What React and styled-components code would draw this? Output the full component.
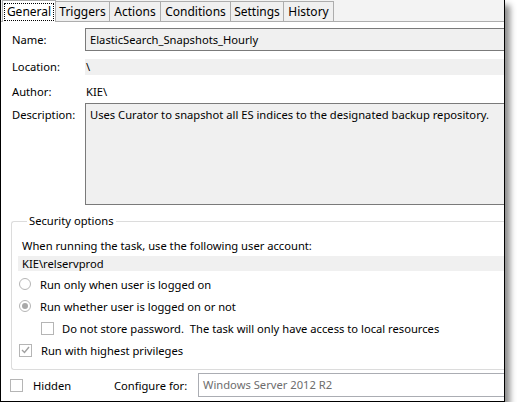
import React from "react";
import styled, { createGlobalStyle } from "styled-components";

const GlobalStyle = createGlobalStyle`
  html, body {
    margin: 0;
    background: #fff;
  }
  body {
    font-family: "Noto Sans", "Liberation Sans", sans-serif;
    font-size: 11.2px;
    color: #000;
  }
`;

const Window = styled.div`
  position: relative;
  width: 503px;
  height: 401px;
  border: 1px solid #000;
  border-top: none;
  background: #fff;
  overflow: hidden;
  box-shadow: 5px 5px 6px rgba(0, 0, 0, 0.45);
`;

const TabBar = styled.div`
  display: flex;
  align-items: flex-end;
  height: 22px;
  padding-left: 1px;
  background: #f3f3f3;
  border-bottom: 1px solid #adadad;
  box-sizing: border-box;
`;

const Tab = styled.div`
  width: ${(p) => p.$w}px;
  height: ${(p) => (p.$active ? 22 : 20)}px;
  box-sizing: border-box;
  display: flex;
  align-items: center;
  justify-content: center;
  background: ${(p) => (p.$active ? "#fff" : "#f0f0f0")};
  border: 1px solid #adadad;
  border-bottom: none;
  margin-bottom: ${(p) => (p.$active ? -1 : 0)}px;
  margin-right: -1px;
  font-size: 12px;
  line-height: 1;
`;

const FocusRing = styled.span`
  padding: 3px 3px;
  outline: 1px dotted #000;
  outline-offset: -1px;
`;

const Body = styled.div`
  padding: 6px 0 0 11px;
`;

const Form = styled.div`
  display: grid;
  grid-template-columns: 73px 1fr;
  align-items: center;
  margin-right: -20px;
`;

const Label = styled.div`
  align-self: ${(p) => (p.$top ? "start" : "center")};
  padding-top: ${(p) => (p.$top ? 4 : 0)}px;
  line-height: 16px;
  margin-bottom: ${(p) => p.$gap || 0}px;
`;

const Field = styled.div`
  box-sizing: border-box;
  height: ${(p) => p.$h}px;
  margin-bottom: ${(p) => p.$gap || 0}px;
  padding: ${(p) => (p.$boxed ? "3px 4px" : "0 1px")};
  line-height: 16px;
  background: ${(p) => (p.$fill ? "#f0f0f0" : "#fff")};
  border: ${(p) => (p.$boxed ? "1px solid #7a7a7a" : "none")};
  white-space: nowrap;
`;

const Group = styled.fieldset`
  margin: 9px 0 0 -1px;
  padding: 10px 0 8px 10px;
  border: 1px solid #dcdcdc;
  border-right: none;
  border-radius: 3px 0 0 3px;
  min-width: 0;
`;

const Legend = styled.legend`
  padding: 0 2px;
  margin-left: 5px;
  line-height: 14px;
`;

const Line = styled.div`
  line-height: 16px;
  white-space: nowrap;
`;

const Account = styled.div`
  margin: 2px 0 2px -4px;
  padding-left: 4px;
  height: 15px;
  line-height: 15px;
  background: #f0f0f0;
`;

const Option = styled.label`
  display: flex;
  align-items: center;
  gap: ${(p) => p.$gap || 9}px;
  height: 22px;
  margin-left: ${(p) => p.$indent || -3}px;
  white-space: nowrap;
`;

const Radio = styled.span`
  position: relative;
  width: 12px;
  height: 12px;
  box-sizing: border-box;
  border: 1px solid #b5b5b5;
  border-radius: 50%;
  background: #fff;
  flex: none;

  &::after {
    content: "";
    display: ${(p) => (p.$on ? "block" : "none")};
    position: absolute;
    inset: 2px;
    border-radius: 50%;
    background: #a8a8a8;
  }
`;

const Check = styled.span`
  width: 13px;
  height: 13px;
  box-sizing: border-box;
  border: 1px solid #b5b5b5;
  background: #fff;
  flex: none;
  display: flex;
  align-items: center;
  justify-content: center;
`;

const Footer = styled.div`
  display: flex;
  align-items: center;
  height: 24px;
  margin-top: 3px;
  margin-left: -2px;
  margin-right: -20px;
`;

const HiddenBox = styled(Option)`
  margin-left: 0;
  width: 104px;
`;

const ConfigLabel = styled.span`
  width: 84px;
  white-space: nowrap;
`;

const Select = styled.div`
  flex: 1;
  height: 24px;
  box-sizing: border-box;
  border: 1px solid #abadb3;
  padding-left: 4px;
  line-height: 22px;
  color: #6d6d6d;
`;

const Tick = () => (
  <svg width="9" height="8" viewBox="0 0 9 8">
    <path d="M1 4 L3.5 6.5 L8 1" fill="none" stroke="#a0a0a0" strokeWidth="1.4" />
  </svg>
);

const tabs = [
  { name: "General", w: 54 },
  { name: "Triggers", w: 55 },
  { name: "Actions", w: 52 },
  { name: "Conditions", w: 71 },
  { name: "Settings", w: 54 },
  { name: "History", w: 51 },
];

export default function App() {
  return (
    <>
      <GlobalStyle />
      <Window>
        <TabBar>
          {tabs.map((t, i) => (
            <Tab key={t.name} $w={t.w} $active={i === 0}>
              {i === 0 ? <FocusRing>{t.name}</FocusRing> : t.name}
            </Tab>
          ))}
        </TabBar>
        <Body>
          <Form>
            <Label $gap={8}>Name:</Label>
            <Field $h={23} $boxed $fill $gap={8}>
              ElasticSearch_Snapshots_Hourly
            </Field>
            <Label $gap={9}>Location:</Label>
            <Field $h={16} $fill $gap={9}>
              \
            </Field>
            <Label $gap={3}>Author:</Label>
            <Field $h={16} $gap={3}>
              KIE\
            </Field>
            <Label $top>Description:</Label>
            <Field $h={102} $boxed $fill>
              Uses Curator to snapshot all ES indices to the designated backup repository.
            </Field>
          </Form>
          <Group>
            <Legend>Security options</Legend>
            <Line>When running the task, use the following user account:</Line>
            <Account>KIE\relservprod</Account>
            <Option>
              <Radio />
              Run only when user is logged on
            </Option>
            <Option>
              <Radio $on />
              Run whether user is logged on or not
            </Option>
            <Option $indent={19} $gap={8}>
              <Check />
              Do not store password.&nbsp; The task will only have access to local resources
            </Option>
            <Option>
              <Check>
                <Tick />
              </Check>
              Run with highest privileges
            </Option>
          </Group>
          <Footer>
            <HiddenBox as="label" $gap={10}>
              <Check />
              Hidden
            </HiddenBox>
            <ConfigLabel>Configure for:</ConfigLabel>
            <Select>Windows Server 2012 R2</Select>
          </Footer>
        </Body>
      </Window>
    </>
  );
}
